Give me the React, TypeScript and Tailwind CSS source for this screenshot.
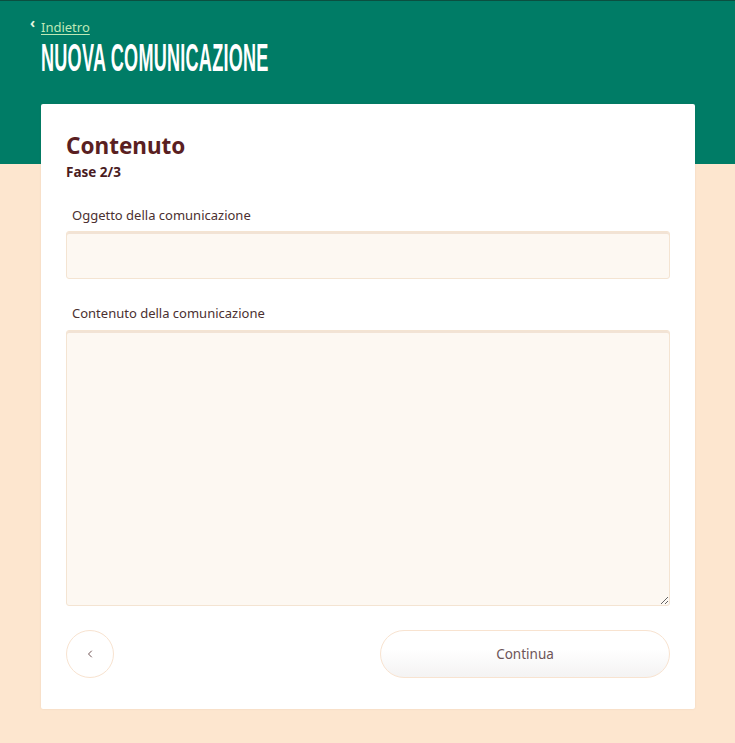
import { ChevronLeft } from "lucide-react"

const body = "font-['Noto_Sans','Open_Sans',sans-serif]"

export default function App() {
  return (
    <div className={`min-h-[743px] bg-[#fde6cf] ${body}`}>
      {/* header verde */}
      <div className="h-[164px] bg-[#007c66] border-t border-[#0b4f40] pl-[41px] pr-[40px] pt-[17px]">
        <div className="relative flex items-center">
          <span className="absolute -left-[11px] -top-[2px] text-[14px] leading-none font-bold text-[#e8f5e0]">‹</span>
          <a href="#" className="text-[13px] leading-[18px] text-[#bfe8b6] underline underline-offset-2">
            Indietro
          </a>
        </div>
        <h1 className="mt-[4px] origin-left scale-x-[0.47] whitespace-nowrap font-['Liberation_Sans',sans-serif] text-[38.5px] font-bold leading-[36px] tracking-[0.5px] text-white">
          NUOVA COMUNICAZIONE
        </h1>
      </div>

      {/* card */}
      <div className="-mt-[60px] pl-[41px] pr-[40px] pb-[34px]">
        <div className="rounded-[2px] bg-white px-[25px] pt-[29px] pb-[31px] shadow-[0_0_2px_rgba(120,80,40,0.12)]">
          <h2 className="text-[22.5px] font-bold leading-[26px] text-[#5a1f22]">Contenuto</h2>
          <p className="mt-[4px] text-[13.5px] font-bold leading-[18px] text-[#4a1c1f]">Fase 2/3</p>

          <label className="mt-[25px] block pl-[6px] text-[13px] leading-[18px] text-[#4b3030]">
            Oggetto della comunicazione
          </label>
          <input
            type="text"
            className="mt-[7px] block h-[48px] w-full rounded-[3px] border border-[#f4e4d2] bg-[#fdf8f2] px-3 shadow-[inset_0_2px_0_#f2e3d5] outline-none"
          />

          <label className="mt-[25px] block pl-[6px] text-[13px] leading-[18px] text-[#4b3030]">
            Contenuto della comunicazione
          </label>
          <textarea className="mt-[8px] block h-[276px] w-full resize-y rounded-[3px] border border-[#f4e4d2] bg-[#fdf8f2] px-3 py-2 shadow-[inset_0_2px_0_#f2e3d5] outline-none" />

          <div className="mt-[24px] flex items-center justify-between">
            <button className="flex h-[48px] w-[48px] items-center justify-center rounded-full border border-[#f8e3d0] bg-white text-[#5a3a3a]">
              <ChevronLeft className="h-[12px] w-[12px]" strokeWidth={1.75} />
            </button>
            <button className="h-[48px] w-[290px] rounded-full border border-[#f8e3d0] bg-gradient-to-b from-white from-40% to-[#f4f3f3] text-[13.5px] text-[#6e5558]">
              Continua
            </button>
          </div>
        </div>
      </div>
    </div>
  )
}
